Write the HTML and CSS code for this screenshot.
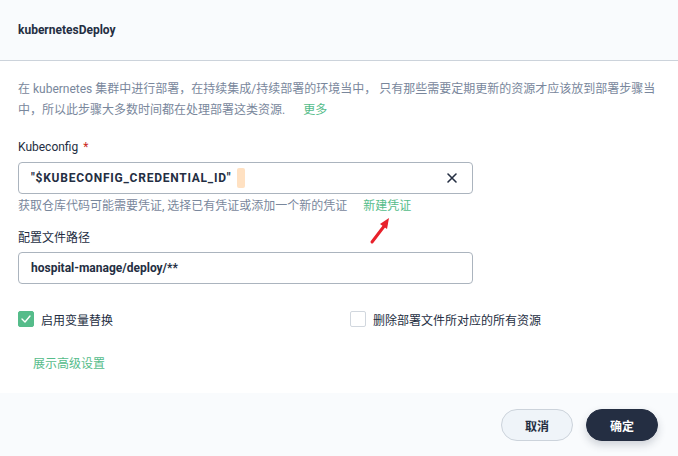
FILE: index.html
```html
<!DOCTYPE html>
<html>
<head>
<meta charset="utf-8">
<link rel="stylesheet" href="styles.css">
</head>
<body>
<div class="modal">
  <div class="header"><span class="title">kubernetesDeploy</span></div>
  <div class="content">
    <p class="desc">在 kubernetes 集群中进行部署，在持续集成/持续部署的环境当中， 只有那些需要定期更新的资源才应该放到部署步骤当<br>中，所以此步骤大多数时间都在处理部署这类资源.<span class="sp"></span><a class="link">更多</a></p>
    <div class="field">
      <label class="label">Kubeconfig <span class="req">*</span></label>
      <div class="input">
        <span class="value wide">"$KUBECONFIG_CREDENTIAL_ID"</span><span class="caret"></span>
        <svg class="clear" width="12" height="12" viewBox="0 0 12 12"><path d="M2 2L10 10M10 2L2 10" stroke="#242e42" stroke-width="1.6" stroke-linecap="round"/></svg>
      </div>
      <p class="help">获取仓库代码可能需要凭证, 选择已有凭证或添加一个新的凭证 <a class="link new">新建凭证</a></p>
    </div>
    <div class="field field2">
      <label class="label">配置文件路径</label>
      <div class="input"><span class="value">hospital-manage/deploy/**</span></div>
    </div>
    <div class="checks">
      <div class="check"><span class="box on"><svg width="10" height="8" viewBox="0 0 10 8"><path d="M1 4L4 7L9 1" fill="none" stroke="#fff" stroke-width="1.4" stroke-linecap="round" stroke-linejoin="round"/></svg></span><span class="ctext">启用变量替换</span></div>
      <div class="check"><span class="box"></span><span class="ctext">删除部署文件所对应的所有资源</span></div>
    </div>
    <a class="link adv">展示高级设置</a>
  </div>
  <div class="footer">
    <button class="btn cancel">取消</button>
    <button class="btn ok">确定</button>
  </div>
  <svg class="arrow" width="30" height="32" viewBox="0 0 30 32"><path d="M4 28L17 11" stroke="#e8212b" stroke-width="3" stroke-linecap="round"/><path d="M21 4L12 10L19 15Z" fill="#e8212b"/></svg>
</div>
</body>
</html>
```
FILE: styles.css
```css
* { box-sizing: border-box; }
html, body { margin: 0; padding: 0; background: #fff; }
body { font-family: Roboto, "Noto Sans CJK SC", sans-serif; font-size: 12px; color: #242e42; }
.modal { position: relative; width: 678px; height: 456px; display: flex; flex-direction: column; }
.header { height: 61px; background: #f9fbfd; border-bottom: 1px solid #ccd3db; display: flex; align-items: center; padding: 0 18px; }
.title { font-weight: 700; font-size: 12px; color: #242e42; }
.content { flex: 1; padding: 18px 10px 0 18px; }
.desc { margin: 0; line-height: 21px; color: #79879c; white-space: nowrap; }
.sp { display: inline-block; width: 18px; }
.link { color: #55bc8a; cursor: pointer; }
.field { margin-top: 16px; width: 455px; }
.field2 { margin-top: 12px; }
.label { display: block; line-height: 20px; color: #242e42; }
.req { color: #ca2621; margin-left: 2px; }
.input { margin-top: 5px; height: 32px; border: 1px solid #abb4be; border-radius: 4px; display: flex; align-items: center; padding: 0 12px; }
.field2 .input { margin-top: 4px; }
.value { font-weight: 700; color: #242e42; }
.value.wide { letter-spacing: 0.75px; }
.caret { display: inline-block; width: 8px; height: 20px; background: #ffe1c2; border-radius: 2px; margin-left: 6px; }
.clear { margin-left: auto; margin-right: 2px; }
.help { margin: 2px 0 0; line-height: 20px; color: #79879c; }
.new { margin-left: 13px; }
.checks { display: grid; grid-template-columns: 332px 1fr; margin-top: 27px; }
.check { display: flex; align-items: center; height: 16px; }
.box { width: 16px; height: 16px; border: 1px solid #d1d7de; border-radius: 2px; background: #fff; display: flex; align-items: center; justify-content: center; }
.box.on { background: #55bc8a; border-color: #55bc8a; }
.ctext { margin-left: 7px; color: #242e42; }
.adv { display: inline-block; margin: 27px 0 0 15px; line-height: 20px; }
.footer { height: 63px; background: #f9fbfd; display: flex; justify-content: flex-end; align-items: flex-start; padding: 16px 20px 0 0; gap: 13px; }
.btn { height: 32px; width: 72px; border-radius: 16px; font-family: inherit; font-size: 12px; font-weight: 700; cursor: pointer; }
.cancel { background: #eff4f9; border: 1px solid #ccd3db; color: #242e42; }
.ok { background: #242e42; border: 1px solid #242e42; color: #fff; box-shadow: 0 4px 8px rgba(36,46,66,0.2); }
.arrow { position: absolute; left: 368px; top: 214px; }
```
